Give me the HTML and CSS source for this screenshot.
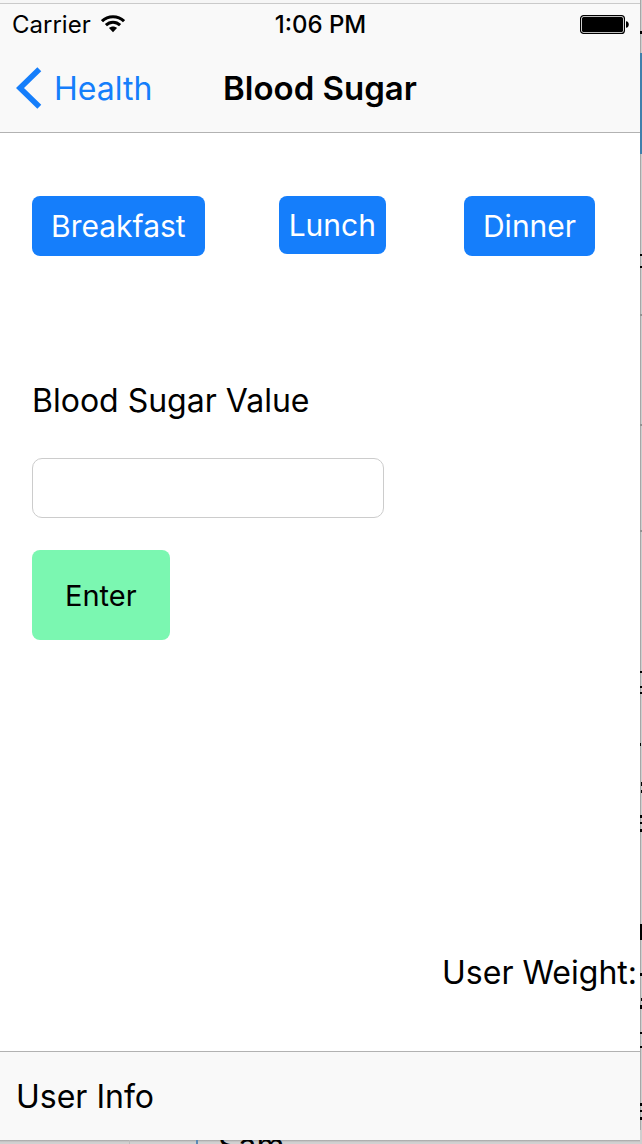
FILE: index.html
```html
<!DOCTYPE html>
<html lang="en">
<head>
<meta charset="utf-8">
<meta name="viewport" content="width=device-width, initial-scale=1">
<title>Blood Sugar</title>
<link rel="stylesheet" href="styles.css">
</head>
<body>
<div class="desktop">
  <div class="phone">
    <header class="header">
      <div class="status">
        <div class="carrier">
          <span>Carrier</span>
          <svg class="wifi" viewBox="0 0 24 18" aria-hidden="true">
            <g fill="none" stroke="#000" stroke-width="3">
              <path d="M1 6.200C7 .3 17 .3 23 6.200"/>
              <path d="M4.900 10.200C9 6.300 15 6.300 19.100 10.200"/>
            </g>
            <path d="M8 13C10.300 11 13.700 11 16 13L12 17.300Z"/>
          </svg>
        </div>
        <time class="clock">1:06 PM</time>
        <svg class="battery" viewBox="0 0 49 19" role="img" aria-label="Battery full">
          <rect x=".6" y=".6" width="43.800" height="17.800" rx="3" fill="#fff" stroke="#000" stroke-width="1.200"/>
          <rect x="2" y="2" width="41" height="15" rx="1.500"/>
          <path d="M46 6.200C49.700 6.200 49.700 12.800 46 12.800Z"/>
        </svg>
      </div>
      <nav class="nav">
        <a class="back" href="#health">
          <svg class="chevron" viewBox="0 0 26 42" aria-hidden="true"><path d="M23.300 2.200 4 21 23.300 39.800" fill="none" stroke="#157efb" stroke-width="5.600"/></svg>
          <span>Health</span>
        </a>
        <h1 class="title">Blood Sugar</h1>
      </nav>
    </header>
    <main class="content">
      <div class="meals">
        <button class="meal" type="button">Breakfast</button>
        <button class="meal meal-compact" type="button">Lunch</button>
        <button class="meal" type="button">Dinner</button>
      </div>
      <form class="entry">
        <label class="label" for="sugar">Blood Sugar Value</label>
        <input class="field" id="sugar" type="text">
        <button class="enter" type="button">Enter</button>
      </form>
      <p class="weight">User Weight:</p>
    </main>
    <footer class="toolbar"><button class="info" type="button">User Info</button></footer>
  </div>
  <svg class="side" viewBox="0 0 2 1144" preserveAspectRatio="none" aria-hidden="true">
    <rect width="2" height="1144" fill="#cecece"/>
    <rect width="1" height="1130" fill="#a7a7a7"/>
    <rect y="53" width="2" height="101" fill="#4080ac"/>
    <path d="M0 31h2v3H0zM0 254h2v2H0zM0 266h2v2H0zM0 671h2v2H0zM0 686h2v2H0zM0 692h2v2H0zM0 743h1v3H0zM1 782h1v4H1zM1 790h1v3H1zM0 815h2v3H0zM0 822h2v2H0zM0 829h2v3H0zM0 924h2v16H0zM0 973h2v3H0zM1 998h1v3H1zM0 1005h2v4H0zM0 1032h2v2H0zM0 1046h2v2H0zM0 1103h2v3H0zM0 1110h2v2H0zM0 1117h2v3H0z"/>
    <path d="M0 314h2v2H0zM0 424h2v2H0zM0 530h2v2H0z" fill="#929292"/>
  </svg>
  <div class="under"><span class="peek">Sam</span></div>
</div>
</body>
</html>
```
FILE: styles.css
```css
* {
  box-sizing: border-box;
}

body {
  margin: 0;
  font-family: Inter, "Liberation Sans", sans-serif;
  color: #000;
  background: #fff;
}

button,
input {
  font: inherit;
  color: inherit;
}

.desktop {
  display: grid;
  grid-template-columns: 1fr 2px;
  grid-template-rows: 1fr 4px;
  min-height: 100vh;
}

.phone {
  display: flex;
  flex-direction: column;
  border-top: 3px solid #f6f6f6;
}

.header {
  border-top: 1px solid #cacaca;
  border-bottom: 1px solid #b2b2b2;
  background: #f9f9f9;
}

.status {
  display: grid;
  grid-template-columns: 1fr auto 1fr;
  align-items: center;
  height: 40px;
  padding: 0 11px 0 12px;
  font-size: 24px;
}

.carrier {
  display: flex;
  align-items: center;
  gap: 10px;
}

.wifi {
  width: 24px;
  height: 18px;
}

.clock {
  font-weight: 500;
}

.battery {
  justify-self: end;
  width: 49px;
  height: 19px;
}

.nav {
  display: grid;
  grid-template-columns: 1fr auto 1fr;
  align-items: center;
  height: 88px;
  padding: 0 16px;
}

.back {
  display: flex;
  align-items: center;
  gap: 12px;
  font-size: 32px;
  color: #157efb;
  text-decoration: none;
}

.chevron {
  width: 26px;
  height: 42px;
}

.title {
  margin: 0;
  font-size: 33px;
  font-weight: 600;
}

.content {
  display: flex;
  flex: 1;
  flex-direction: column;
  padding: 63px 3px 58px 32px;
}

.meals {
  display: flex;
  align-items: flex-start;
  gap: 74px;
}

.meal {
  height: 60px;
  padding: 0 19px;
  border: 0;
  border-radius: 8px;
  background: #157efb;
  color: #fff;
  font-size: 30px;
}

.meal-compact {
  height: 58px;
  margin-right: 4px;
  padding: 0 10px;
}

.entry {
  display: flex;
  flex-direction: column;
  align-items: flex-start;
  margin-top: 125px;
}

.label,
.weight {
  font-size: 32px;
  line-height: 40px;
}

.field {
  width: 352px;
  max-width: 100%;
  height: 60px;
  margin: 37px 0 32px;
  padding: 0 14px;
  border: 1px solid #cccccc;
  border-radius: 10px;
  background: #fff;
  font-size: 29px;
}

.enter {
  height: 90px;
  padding: 0 33px;
  border: 0;
  border-radius: 8px;
  background: #7bf7b1;
  font-size: 29px;
}

.weight {
  margin: auto 0 0;
  text-align: right;
}

.toolbar {
  display: flex;
  align-items: center;
  height: 89px;
  padding: 0 16px;
  border-top: 1px solid #b2b2b2;
  background: #f9f9f9;
}

.info {
  padding: 0;
  border: 0;
  background: none;
  font-size: 32px;
}

.side {
  grid-row: 1 / 3;
  grid-column: 2;
  width: 2px;
  height: 100%;
}

.under {
  grid-row: 2;
  grid-column: 1;
  overflow: hidden;
  padding-left: 218px;
  background:
    linear-gradient(#5b89b5, #5b89b5) 196px 0 / 2px 4px no-repeat,
    linear-gradient(#bcbcbc, #bcbcbc) 129px 0 / 1px 4px no-repeat,
    linear-gradient(#a4a4a4, #cecece 50%, #d2d2d2);
}

.peek {
  display: block;
  font-size: 32px;
  line-height: 12px;
}
```
